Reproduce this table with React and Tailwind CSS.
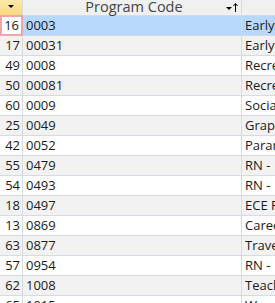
import React from "react";

const rows = [
  ["16", "0003", "Early"],
  ["17", "00031", "Early"],
  ["49", "0008", "Recre"],
  ["50", "00081", "Recre"],
  ["60", "0009", "Socia"],
  ["25", "0049", "Grap"],
  ["42", "0052", "Param"],
  ["55", "0479", "RN - "],
  ["54", "0493", "RN - "],
  ["18", "0497", "ECE F"],
  ["13", "0869", "Caree"],
  ["63", "0877", "Trave"],
  ["57", "0954", "RN - "],
  ["62", "1008", "Teach"],
  ["65", "1015", "W"],
];

export default function App() {
  return (
    <div
      className="w-[275px] h-[303px] overflow-hidden bg-white text-[13px] text-[#1a1a1a]"
      style={{ fontFamily: '"Open Sans", "Liberation Sans", sans-serif' }}
    >
      {/* header */}
      <div className="flex h-[16px] border-b border-[#d5dbe3]">
        <div className="w-[23px] shrink-0 border-r border-[#d5dbe3] bg-gradient-to-b from-[#fdeaa9] to-[#f8d87c] flex justify-center pt-[5px]">
          <div className="w-0 h-0 border-l-[3px] border-r-[3px] border-t-[3px] border-l-transparent border-r-transparent border-t-black" />
        </div>
        <div className="w-[219px] shrink-0 border-r border-[#d5dbe3] bg-[#f0f0f0] relative flex items-center justify-center leading-none text-[#444] text-[14.5px]">
          <span className="-mt-[1px] ml-[4px]">Program Code</span>
          <div className="absolute right-[3px] top-[3px] flex items-start">
            <div className="mt-[4px] w-0 h-0 border-l-[3px] border-r-[3px] border-t-[3px] border-l-transparent border-r-transparent border-t-black" />
            <svg width="5" height="9" viewBox="0 0 5 9" className="ml-[1px]">
              <path d="M2.5 1 V9" stroke="black" strokeWidth="1" />
              <path d="M0.5 3 L2.5 0.5 L4.5 3" stroke="black" strokeWidth="1" fill="none" />
            </svg>
          </div>
        </div>
        <div className="flex-1 bg-[#f0f0f0]" />
      </div>
      {rows.map((r, i) => {
        const selected = i === 0;
        const bg = selected ? "bg-[#b7d7fb]" : i % 2 === 1 ? "bg-[#f2f2f2]" : "bg-white";
        return (
          <div key={i} className="flex h-[20px] border-b border-[#d5dbe3] leading-none">
            <div
              className={`w-[23px] shrink-0 flex items-center justify-end pr-[2px] ${
                selected
                  ? "bg-white border-2 border-[#f0a5a8] -mt-[1px] h-[21px]"
                  : `border-r border-[#d5dbe3] ${bg}`
              }`}
            >
              {r[0]}
            </div>
            <div className={`w-[219px] shrink-0 border-r border-[#d5dbe3] flex items-center pl-[3px] ${bg}`}>
              {r[1]}
            </div>
            <div className={`flex-1 flex items-center pl-[3px] whitespace-nowrap overflow-hidden ${bg}`}>
              {r[2]}
            </div>
          </div>
        );
      })}
    </div>
  );
}
